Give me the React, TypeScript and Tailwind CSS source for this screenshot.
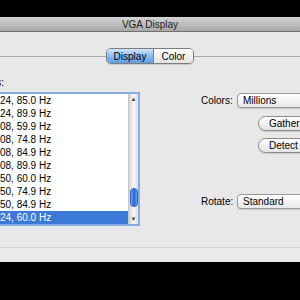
import React from "react";

const modes = [
  { pre: "1280 x 10", rest: "24, 85.0 Hz" },
  { pre: "1280 x 10", rest: "24, 89.9 Hz" },
  { pre: "1344 x 10", rest: "08, 59.9 Hz" },
  { pre: "1344 x 10", rest: "08, 74.8 Hz" },
  { pre: "1344 x 10", rest: "08, 84.9 Hz" },
  { pre: "1344 x 10", rest: "08, 89.9 Hz" },
  { pre: "1400 x 10", rest: "50, 60.0 Hz" },
  { pre: "1400 x 10", rest: "50, 74.9 Hz" },
  { pre: "1400 x 10", rest: "50, 84.9 Hz" },
  { pre: "1600 x 10", rest: "24, 60.0 Hz" },
];

function Popup({ label }: { label: string }) {
  return (
    <div className="h-[15px] w-[90px] shrink-0 rounded-l-[4px] border border-[#9a9a9a] bg-gradient-to-b from-white to-[#e9e9e9] pl-[5px] text-[10px] leading-[13px] text-black shadow-[0_1px_1px_rgba(0,0,0,0.15)]">
      {label}
    </div>
  );
}

function Pill({ label }: { label: string }) {
  return (
    <div className="h-[15px] w-[70px] shrink-0 rounded-full border border-[#8c8c8c] bg-gradient-to-b from-white to-[#e4e4e4] pl-[10px] text-[10px] leading-[13px] text-black shadow-[0_1px_1px_rgba(0,0,0,0.15)]">
      {label}
    </div>
  );
}

export default function App() {
  return (
    <div
      className="flex h-[300px] w-[300px] flex-col overflow-hidden bg-black text-[10px] text-black"
      style={{ fontFamily: '"Liberation Sans", Arial, sans-serif' }}
    >
      <div className="h-[17px] shrink-0" />

      {/* title bar */}
      <div className="flex h-[15px] shrink-0 items-center justify-center border-b border-[#6f6f6f] bg-gradient-to-b from-[#d4d4d4] to-[#a9a9a9] text-[10px] text-[#1a1a1a]">
        VGA Display
      </div>

      {/* window body */}
      <div className="flex h-[215px] shrink-0 flex-col overflow-hidden bg-[#e8e8e8]">
        {/* tabs */}
        <div className="mt-[16px] flex h-[16px] items-center">
          <div className="h-px w-[106px] bg-[#a9a9a9]" />
          <div className="flex h-[16px] overflow-hidden rounded-[5px] border border-[#7d7d7d] shadow-[0_1px_1px_rgba(0,0,0,0.15)]">
            <div className="flex w-[47px] items-center justify-center border-r border-[#7d7d7d] bg-gradient-to-b from-[#d3e6fb] via-[#8dbdf3] to-[#5e9de9] font-medium">
              Display
            </div>
            <div className="flex w-[39px] items-center justify-center bg-gradient-to-b from-white to-[#e2e2e2]">
              Color
            </div>
          </div>
          <div className="h-px flex-1 bg-[#a9a9a9]" />
        </div>

        <div className="flex">
          {/* resolutions list */}
          <div className="flex w-[140px] shrink-0 flex-col">
            <div className="ml-[-60px] mt-[13px] h-[12px] w-[64px] text-right leading-[12px]">
              Resolutions:
            </div>
            <div className="ml-[-4px] mt-[3px] flex h-[134px] w-[144px] border-2 border-[#86aee6] bg-white">
              <div className="flex flex-1 flex-col overflow-hidden">
                {modes.map((m, i) => (
                  <div
                    key={i}
                    className={
                      "flex h-[13px] items-center whitespace-nowrap pl-[2px] leading-[13px] " +
                      (i === modes.length - 1 ? "bg-[#3b79d9] text-white" : "")
                    }
                  >
                    <span className="ml-[-60px] inline-block w-[60px] text-right">{m.pre}</span>
                    <span>{m.rest}</span>
                  </div>
                ))}
              </div>
              {/* scroll bar */}
              <div className="flex w-[10px] flex-col border-l border-[#c6c6c6] bg-gradient-to-r from-[#d2d2d2] via-[#f7f7f7] to-[#dedede]">
                <div className="flex h-[10px] items-center justify-center text-[6px] text-[#444]">▲</div>
                <div className="flex-1">
                  <div className="mx-auto mt-[84px] h-[19px] w-[8px] rounded-full border border-[#2b5fbf] bg-gradient-to-r from-[#76aef5] via-[#1f61d6] to-[#6aa6f3]" />
                </div>
                <div className="flex h-[10px] items-center justify-center text-[6px] text-[#444]">▼</div>
              </div>
            </div>
          </div>

          {/* right column */}
          <div className="ml-[61px] flex flex-col">
            <div className="mt-[29px] flex items-center">
              <div className="w-[30px] text-right">Colors:</div>
              <div className="ml-[6px]">
                <Popup label="Millions" />
              </div>
            </div>
            <div className="ml-[57px] mt-[8px]">
              <Pill label="Gather" />
            </div>
            <div className="ml-[57px] mt-[7px]">
              <Pill label="Detect" />
            </div>
            <div className="mt-[41px] flex items-center">
              <div className="w-[30px] text-right">Rotate:</div>
              <div className="ml-[6px]">
                <Popup label="Standard" />
              </div>
            </div>
          </div>
        </div>
      </div>

      {/* bottom strip */}
      <div className="h-[15px] shrink-0 border-t border-[#d2d2d2] bg-[#ebebeb]" />
    </div>
  );
}
